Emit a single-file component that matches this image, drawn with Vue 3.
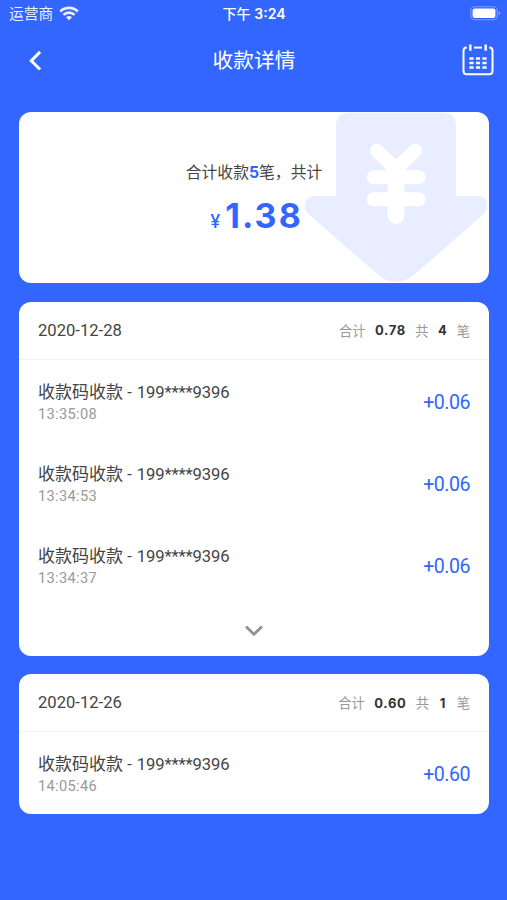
<script setup>
const groups = [
  {
    date: '2020-12-28',
    total: '0.78',
    count: 4,
    more: true,
    items: [
      { time: '13:35:08', amount: '+0.06' },
      { time: '13:34:53', amount: '+0.06' },
      { time: '13:34:37', amount: '+0.06' }
    ]
  },
  {
    date: '2020-12-26',
    total: '0.60',
    count: 1,
    more: false,
    items: [{ time: '14:05:46', amount: '+0.60' }]
  }
]
</script>

<template>
  <div class="screen">
    <div class="status">
      <div class="carrier">
        <span>运营商</span>
        <svg class="wifi" width="20" height="15" viewBox="0 0 20 15" fill="none" stroke="#fff" stroke-width="2.7">
          <path d="M1.2 5.5C6.2.7 13.8.7 18.8 5.5" />
          <path d="M4.4 8.9C7.6 5.8 12.4 5.8 15.6 8.9" />
          <path d="M10 14.3L7 11.3Q10 8.6 13 11.3Z" fill="#fff" stroke="none" />
        </svg>
      </div>
      <div class="clock">下午 <b>3:24</b></div>
      <div class="power">
        <svg width="31" height="15" viewBox="0 0 31 15">
          <rect x=".8" y=".8" width="26.4" height="12.9" rx="3.8" fill="none" stroke="#fff" stroke-opacity=".35" stroke-width="1.1" />
          <rect x="2.6" y="2.5" width="22.8" height="9.4" rx="2" fill="#fff" />
          <path d="M28.7 5.2Q31.4 7.2 28.7 9.3Z" fill="#fff" fill-opacity=".5" />
        </svg>
      </div>
    </div>

    <div class="nav">
      <svg class="back" width="14" height="20" viewBox="0 0 14 20" fill="none" stroke="#fff" stroke-width="3">
        <path d="M12.1 1.9L3.3 10.7L12.1 19.5" />
      </svg>
      <h1>收款详情</h1>
      <svg class="calendar" width="32" height="32" viewBox="0 0 32 32" fill="none" stroke="#fff" stroke-width="2">
        <path d="M4.8 3.6Q1.5 3.6 1.5 7V26.9Q1.5 30.2 4.8 30.2H27.2Q30.5 30.2 30.5 26.9V7Q30.5 3.6 27.2 3.6" />
        <path d="M12 3.6H20" />
        <path d="M8.3.5V6.8M23.7.5V6.8" stroke-width="2.4" />
        <path d="M7.4 14.5H24.6M7.4 19H24.6M7.4 23.5H24.6" stroke-width="2.5" stroke-dasharray="4.2 2.3" />
      </svg>
    </div>

    <main>
      <section class="card summary">
        <svg class="arrow" width="185" height="171" viewBox="42 36 555 513">
          <path fill="#e8eeff" d="M138 78Q138 38 178 38H460Q498 38 498 78V288H568Q592 290 592 318Q592 332 580 343L371 526Q350 545 318 545Q286 545 266 526L56 343Q44 332 44 318Q45 290 72 288H138Z" />
          <g fill="none" stroke="#fff" stroke-linecap="round" stroke-linejoin="round">
            <path stroke-width="42" d="M261 152L318 207L375 152M251 232H386M251 298H386" />
            <path stroke-width="50" d="M318 215V347" />
          </g>
        </svg>
        <p class="caption">合计收款<b>5</b>笔，共计</p>
        <p class="sum"><span class="yen">¥</span><span class="value">1.38</span></p>
      </section>

      <section v-for="g in groups" :key="g.date" class="card group">
        <header>
          <span class="date">{{ g.date }}</span>
          <span class="stats">
            <span>合计</span><b>{{ g.total }}</b><span>共</span><b>{{ g.count }}</b><span>笔</span>
          </span>
        </header>
        <div v-for="item in g.items" :key="item.time" class="row">
          <div class="info">
            <div class="name">收款码收款 <span class="phone">- <span>199****9396</span></span></div>
            <div class="time">{{ item.time }}</div>
          </div>
          <div class="amount">{{ item.amount }}</div>
        </div>
        <div v-if="g.more" class="more">
          <svg width="20" height="12" viewBox="0 0 20 12" fill="none" stroke="#929292" stroke-width="2.8">
            <path d="M2 1.5L10 9.3L18 1.5" />
          </svg>
        </div>
      </section>
    </main>
  </div>
</template>

<style>
body {
  background: #3366ff;
}
</style>

<style scoped>
.screen {
  box-sizing: border-box;
  width: 507px;
  height: 900px;
  overflow: hidden;
  background: #3366ff;
  color: #444;
  font-family: Roboto, "Noto Sans CJK SC", sans-serif;
}
.status {
  display: grid;
  grid-template-columns: 1fr auto 1fr;
  align-items: center;
  height: 28px;
  padding: 0 6px 0 9px;
  color: #fff;
  font: 14px/28px Inter, "Noto Sans CJK SC", sans-serif;
}
.carrier {
  display: flex;
  align-items: center;
  gap: 6px;
  font-size: 14.7px;
  opacity: .9;
}
.wifi {
  display: block;
  margin-top: -2px;
}
.clock {
  margin: -1px 0 0 -2px;
  font-weight: 500;
  white-space: pre;
}
.clock b {
  font-weight: 600;
}
.power {
  display: flex;
  justify-content: flex-end;
}
.power svg {
  margin-top: -1px;
}
.nav {
  display: flex;
  align-items: center;
  justify-content: space-between;
  height: 64px;
  padding: 0 13px 0 28px;
  color: #fff;
}
h1 {
  margin: 2px 0 0 4px;
  font-size: 20.7px;
  font-weight: 400;
  line-height: 30px;
}
main {
  display: flex;
  flex-direction: column;
  gap: 18.5px;
  padding: 20px 18px 0 19px;
}
.card {
  border-radius: 12px;
  background: #fff;
}
.summary {
  position: relative;
  box-sizing: border-box;
  height: 171px;
  padding-top: 48px;
  overflow: hidden;
  text-align: center;
}
.arrow {
  position: absolute;
  top: 0;
  right: 0;
}
.summary p {
  position: relative;
  margin: 0;
}
.caption {
  font-size: 15.8px;
  line-height: 26px;
}
.caption b,
.sum {
  color: #3366ff;
  font-family: Inter, sans-serif;
}
.sum {
  display: flex;
  align-items: baseline;
  justify-content: center;
  gap: 5px;
  padding-left: 5px;
  line-height: 60px;
}
.yen {
  font-size: 18px;
  font-weight: 500;
}
.value {
  font-size: 34px;
  font-weight: 650;
  letter-spacing: 2.1px;
}
header {
  display: flex;
  align-items: center;
  justify-content: space-between;
  height: 57px;
  padding: 0 19px;
  border-bottom: 1px solid #f3f3f3;
}
.date {
  font-size: 16.6px;
}
.stats {
  display: flex;
  align-items: center;
  gap: 9.3px;
  color: #999;
  font-size: 13.3px;
}
.stats b {
  min-width: 9px;
  color: #333;
  font: 650 13px Inter, sans-serif;
  letter-spacing: .7px;
  text-align: center;
}
.row {
  box-sizing: border-box;
  display: flex;
  align-items: center;
  justify-content: space-between;
  height: 82px;
  padding: 3px 19px 0;
}
.row:not(:last-child) {
  background: linear-gradient(#fbfbfb, #fbfbfb) 43px 100% / 402px 1px no-repeat;
}
.name {
  font-size: 17px;
  line-height: 22px;
  white-space: nowrap;
}
.phone {
  font-size: 16.6px;
  letter-spacing: -.1px;
}
.phone span {
  margin-left: 1px;
}
.time {
  color: #999;
  font-size: 14.6px;
  line-height: 20px;
  letter-spacing: .35px;
}
.amount {
  color: #3366ff;
  font-size: 19.6px;
  letter-spacing: -.5px;
}
.more {
  display: flex;
  align-items: center;
  justify-content: center;
  height: 50px;
}
</style>
